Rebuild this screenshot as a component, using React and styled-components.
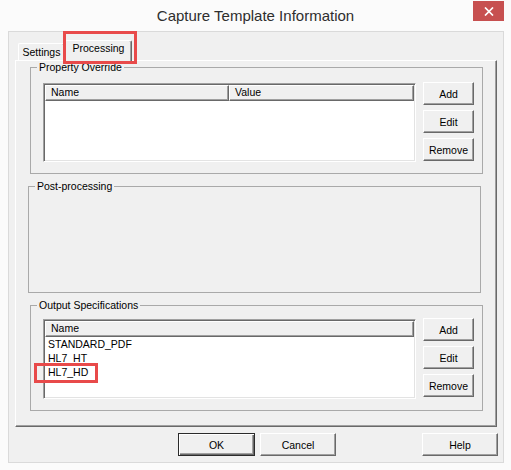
import styled, { createGlobalStyle } from 'styled-components'

const GlobalStyle = createGlobalStyle`
  html, body {
    margin: 0;
    padding: 0;
    background: #fbfbfb;
  }
  body {
    font-family: "Liberation Sans", Arial, sans-serif;
    font-size: 10.5px;
    color: #000;
  }
  * {
    box-sizing: border-box;
  }
`

const overrides = []
const outputs = ['STANDARD_PDF', 'HL7_HT', 'HL7_HD']

function App() {
  return (
    <>
      <GlobalStyle />
      <Window>
        <TitleBar>
          <span />
          <Title>Capture Template Information</Title>
          <CloseButton aria-label='Close'>
            <svg width='10' height='9' viewBox='0 0 10 9'>
              <path d='M1 0.5 L9 8.5 M9 0.5 L1 8.5' stroke='#fff' strokeWidth='1.7' />
            </svg>
          </CloseButton>
        </TitleBar>

        <Client>
          <TabRow>
            <Tab>Settings</Tab>
            <Tab $active>
              Processing
              <Highlight $left={-3} $top={-10} $w={74} $h={33} />
            </Tab>
          </TabRow>

          <Panel>
            <Group $left={14}>
              <Legend>Property Override</Legend>
              <GroupBody $top={10}>
                <List $h={79}>
                  <Header>
                    <HeaderCell $w={184}>Name</HeaderCell>
                    <HeaderCell $w={185}>Value</HeaderCell>
                  </Header>
                  {overrides.map((row) => (
                    <Item key={row}>{row}</Item>
                  ))}
                </List>
                <ButtonColumn $gap={5}>
                  <SideButton>Add</SideButton>
                  <SideButton>Edit</SideButton>
                  <SideButton>Remove</SideButton>
                </ButtonColumn>
              </GroupBody>
            </Group>

            <Group $left={12} $gap={6}>
              <Legend>Post-processing</Legend>
              <GroupBody $top={0} $bottom={0} $minH={100} />
            </Group>

            <Group $left={14} $gap={6}>
              <Legend>Output Specifications</Legend>
              <GroupBody $top={8}>
                <List $h={80}>
                  <Header>
                    <HeaderCell $w={369}>Name</HeaderCell>
                  </Header>
                  {outputs.map((row) => (
                    <Item key={row}>{row}</Item>
                  ))}
                  <Highlight $left={-10} $top={43} $w={64} $h={20} />
                </List>
                <ButtonColumn $gap={5}>
                  <SideButton>Add</SideButton>
                  <SideButton>Edit</SideButton>
                  <SideButton>Remove</SideButton>
                </ButtonColumn>
              </GroupBody>
            </Group>
          </Panel>

          <ButtonRow>
            <DialogButton $default>OK</DialogButton>
            <DialogButton $gap={5}>Cancel</DialogButton>
            <DialogButton $push>Help</DialogButton>
          </ButtonRow>
        </Client>
      </Window>
    </>
  )
}

export default App

const Window = styled.div`
  width: 511px;
  height: 470px;
  display: flex;
  flex-direction: column;
  background: #fbfbfb;
`

const TitleBar = styled.div`
  height: 31px;
  display: grid;
  grid-template-columns: 1fr auto 1fr;
  align-items: center;
`

const Title = styled.div`
  font-size: 15px;
  line-height: 18px;
  color: #2e2e2e;
`

const CloseButton = styled.div`
  justify-self: end;
  align-self: start;
  margin-top: 1px;
  margin-right: 7px;
  width: 31px;
  height: 20px;
  background: #c75050;
  display: flex;
  align-items: center;
  justify-content: center;
`

const Client = styled.div`
  margin: 0 7px 0 8px;
  height: 432px;
  border: 1px solid #dadada;
  background: #f0f0f0;
  padding: 0 6px;
  display: flex;
  flex-direction: column;
`

const TabRow = styled.div`
  height: 28px;
  display: flex;
  align-items: flex-end;
  padding-left: 3px;
`

const Tab = styled.div`
  position: relative;
  z-index: ${(p) => (p.$active ? 1 : 0)};
  width: ${(p) => (p.$active ? 67 : 47)}px;
  height: ${(p) => (p.$active ? 21 : 17)}px;
  margin-bottom: ${(p) => (p.$active ? -1 : 0)}px;
  padding-top: ${(p) => (p.$active ? 1 : 2)}px;
  background: #f0f0f0;
  border-top: 1px solid #fff;
  border-left: 1px solid #fff;
  border-right: 1px solid #696969;
  border-radius: 2px 2px 0 0;
  box-shadow: inset -1px 0 0 #a0a0a0;
  text-align: center;
  line-height: 12px;
  white-space: nowrap;
`

const Highlight = styled.span`
  position: absolute;
  left: ${(p) => p.$left}px;
  top: ${(p) => p.$top}px;
  width: ${(p) => p.$w}px;
  height: ${(p) => p.$h}px;
  border: 3px solid #e84a4a;
  pointer-events: none;
`

const Panel = styled.div`
  height: 367px;
  border-top: 1px solid #fff;
  border-left: 1px solid #fff;
  border-right: 1px solid #696969;
  border-bottom: 1px solid #696969;
  box-shadow: inset -1px -1px 0 #a0a0a0;
  display: flex;
  flex-direction: column;
`

const Group = styled.fieldset`
  margin: ${(p) => p.$gap || 0}px 0 0 ${(p) => p.$left}px;
  padding: 0;
  min-width: 0;
  width: 453px;
  border: 1px solid #a9a9a9;
`

const Legend = styled.legend`
  margin-left: 6px;
  padding: 0 2px;
  height: 12px;
  line-height: 12px;
  font-size: 10.5px;
`

const GroupBody = styled.div`
  display: flex;
  align-items: flex-start;
  padding: ${(p) => p.$top}px 8px ${(p) => p.$bottom ?? 11}px 12px;
  min-height: ${(p) => p.$minH || 0}px;
`

const List = styled.div`
  position: relative;
  flex-shrink: 0;
  width: 373px;
  height: ${(p) => p.$h}px;
  padding: 1px;
  background: #fff;
  border-top: 1px solid #a0a0a0;
  border-left: 1px solid #a0a0a0;
  border-right: 1px solid #fff;
  border-bottom: 1px solid #fff;
  box-shadow: inset 1px 1px 0 #696969, inset -1px -1px 0 #e3e3e3;
`

const Header = styled.div`
  display: flex;
  height: 16px;
`

const HeaderCell = styled.div`
  width: ${(p) => p.$w}px;
  height: 16px;
  padding-left: 5px;
  line-height: 13px;
  background: #f0f0f0;
  border-top: 1px solid #fff;
  border-left: 1px solid #fff;
  border-right: 1px solid #696969;
  border-bottom: 1px solid #696969;
  box-shadow: inset -1px -1px 0 #a0a0a0;
`

const Item = styled.div`
  height: 14px;
  line-height: 14px;
  padding-left: 3px;
`

const ButtonColumn = styled.div`
  display: flex;
  flex-direction: column;
  gap: ${(p) => p.$gap}px;
  margin-left: 7px;
  margin-top: -1px;
`

const buttonBevel = `
  background: #f0f0f0;
  font-family: "Liberation Sans", Arial, sans-serif;
  font-size: 10.5px;
  color: #000;
  padding: 0;
  display: flex;
  align-items: center;
  justify-content: center;
`

const SideButton = styled.button`
  ${buttonBevel}
  width: 51px;
  height: 23px;
  border-top: 1px solid #fff;
  border-left: 1px solid #fff;
  border-right: 1px solid #696969;
  border-bottom: 1px solid #696969;
  box-shadow: inset -1px -1px 0 #a0a0a0;
`

const ButtonRow = styled.div`
  margin-top: 6px;
  height: 23px;
  display: flex;
  padding-left: 163px;
`

const DialogButton = styled.button`
  ${buttonBevel}
  width: ${(p) => (p.$default ? 77 : 76)}px;
  height: 23px;
  margin-left: ${(p) => (p.$push ? 'auto' : `${p.$gap || 0}px`)};
  margin-right: ${(p) => (p.$push ? -1 : 0)}px;
  border: 1px solid;
  border-color: ${(p) =>
    p.$default ? '#2b2b2b' : '#fff #696969 #696969 #fff'};
  box-shadow: ${(p) =>
    p.$default
      ? 'inset 1px 1px 0 #fff, inset -1px -1px 0 #696969, inset -2px -2px 0 #a0a0a0'
      : 'inset -1px -1px 0 #a0a0a0'};
`
